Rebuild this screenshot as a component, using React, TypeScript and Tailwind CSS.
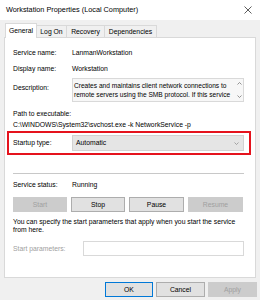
import React from 'react';

const Btn = ({ label, disabled, primary, w }: { label: string; disabled?: boolean; primary?: boolean; w: string }) => (
  <div
    className={`${w} h-[15px] flex items-center justify-center border ${
      disabled
        ? 'bg-[#cccccc] border-[#cccccc] text-[#a0a0a0]'
        : primary
        ? 'bg-[#e1e1e1] border-[#0078d7] text-black'
        : 'bg-[#e1e1e1] border-[#adadad] text-black'
    }`}
  >
    {label}
  </div>
);

const Row = ({ label, value, cls }: { label: string; value: string; cls: string }) => (
  <div className={`flex items-center h-[10px] ${cls}`}>
    <div className="w-[59px] shrink-0">{label}</div>
    <div>{value}</div>
  </div>
);

export default function App() {
  return (
    <div
      className="w-[260px] h-[300px] bg-[#f0f0f0] text-[6.8px] leading-[8px] text-black overflow-hidden"
      style={{ fontFamily: '"Liberation Sans", Arial, sans-serif' }}
    >
      {/* title bar */}
      <div className="h-[20px] bg-white flex items-center justify-between pl-[6px] pr-[8px]">
        <span className="text-[7.3px]">Workstation Properties (Local Computer)</span>
        <svg width="8" height="8" viewBox="0 0 8 8" className="text-[#333]">
          <path d="M0.5 0.5L7.5 7.5M7.5 0.5L0.5 7.5" stroke="currentColor" strokeWidth="0.8" />
        </svg>
      </div>

      {/* tabs */}
      <div className="flex items-end h-[17px] pl-[5px]">
        <div className="relative z-10 -mb-px h-[15px] w-[32px] bg-white border border-b-0 border-[#d9d9d9] flex items-center justify-center">
          General
        </div>
        <div className="h-[12px] w-[30px] border border-b-0 border-l-0 border-[#d9d9d9] flex items-center justify-center">
          Log On
        </div>
        <div className="h-[12px] w-[38px] border border-b-0 border-l-0 border-[#d9d9d9] flex items-center justify-center">
          Recovery
        </div>
        <div className="h-[12px] w-[52px] border border-b-0 border-l-0 border-[#d9d9d9] flex items-center justify-center">
          Dependencies
        </div>
      </div>

      {/* panel */}
      <div className="mx-[4px] w-[252px] h-[241px] bg-white border border-[#d9d9d9] pl-[8px] pr-[11px] flex flex-col">
        <Row cls="mt-[10px]" label="Service name:" value="LanmanWorkstation" />
        <Row cls="mt-[6px]" label="Display name:" value="Workstation" />

        <div className="flex mt-[4px] h-[24px]">
          <div className="w-[59px] shrink-0 pt-[6px]">Description:</div>
          <div className="flex-1 flex bg-[#f7f7f7] border border-[#d9d9d9] overflow-hidden">
            <div className="flex-1 pl-[1px] pt-[2px] overflow-hidden whitespace-nowrap leading-[9px] text-[6.6px]">
              <div>Creates and maintains client network connections to</div>
              <div>remote servers using the SMB protocol. If this service</div>
            </div>
            <div className="w-[8px] flex flex-col items-center justify-between py-[3px] text-[#777]">
              <svg width="5" height="3" viewBox="0 0 5 3">
                <path d="M0.5 2.5L2.5 0.5L4.5 2.5" fill="none" stroke="currentColor" strokeWidth="0.8" />
              </svg>
              <svg width="5" height="3" viewBox="0 0 5 3">
                <path d="M0.5 0.5L2.5 2.5L4.5 0.5" fill="none" stroke="currentColor" strokeWidth="0.8" />
              </svg>
            </div>
          </div>
        </div>

        <div className="mt-[7px] h-[10px] flex items-center">Path to executable:</div>
        <div className="mt-[1px] h-[10px] flex items-center whitespace-nowrap">
          C:\WINDOWS\System32\svchost.exe -k NetworkService -p
        </div>

        {/* highlighted startup type */}
        <div className="-ml-[6px] -mr-[7px] mt-[1px] h-[24px] border-2 border-[#e5131d] flex items-center pl-[4px] pr-[5px]">
          <div className="w-[59px] shrink-0">Startup type:</div>
          <div className="flex-1 h-[16px] bg-[#e5e5e5] border border-[#d2d2d2] flex items-center justify-between pl-[3px] pr-[4px]">
            <span>Automatic</span>
            <svg width="5" height="3" viewBox="0 0 5 3" className="text-[#888]">
              <path d="M0.5 0.5L2.5 2.5L4.5 0.5" fill="none" stroke="currentColor" strokeWidth="0.7" />
            </svg>
          </div>
        </div>

        <div className="mt-[18px] h-px bg-[#c8c8c8]" />

        <Row cls="mt-[6px]" label="Service status:" value="Running" />

        <div className="mt-[7px] flex gap-[4px]">
          <Btn w="w-[54px]" label="Start" disabled />
          <Btn w="w-[54px]" label="Stop" />
          <Btn w="w-[55px]" label="Pause" />
          <Btn w="w-[55px]" label="Resume" disabled />
        </div>

        <div className="mt-[6px] leading-[8px]">
          <div className="whitespace-nowrap">You can specify the start parameters that apply when you start the service</div>
          <div>from here.</div>
        </div>

        <div className="mt-[7px] flex items-center h-[15px]">
          <div className="w-[70px] shrink-0 text-[#a0a0a0]">Start parameters:</div>
          <div className="flex-1 h-[15px] border border-[#d9d9d9] bg-white" />
        </div>
      </div>

      {/* footer buttons */}
      <div className="flex justify-end gap-[3px] pr-[3px] mt-[4px]">
        <Btn w="w-[48px]" label="OK" primary />
        <Btn w="w-[49px]" label="Cancel" />
        <Btn w="w-[49px]" label="Apply" disabled />
      </div>
    </div>
  );
}
